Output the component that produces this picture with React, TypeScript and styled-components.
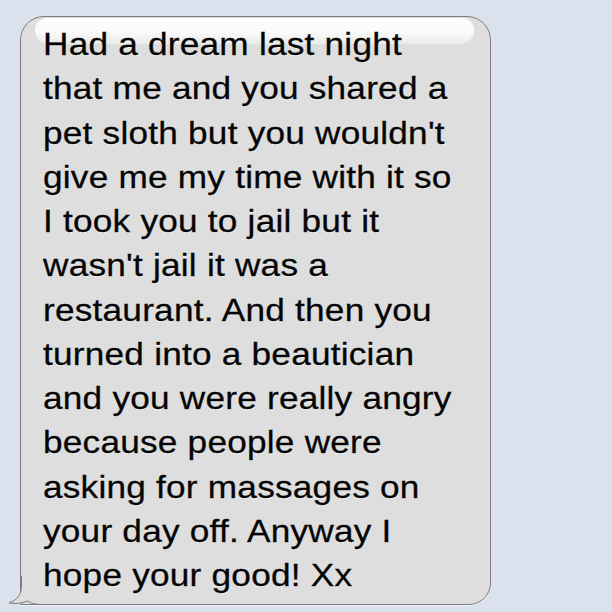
import React from 'react'
import styled, { createGlobalStyle } from 'styled-components'

const GlobalStyle = createGlobalStyle`
  html, body {
    margin: 0;
    padding: 0;
    background: #dbe1ed;
  }
`

const Page = styled.div`
  width: 612px;
  height: 612px;
  background: #dbe1ed;
  padding: 16px 0 0 20px;
  box-sizing: border-box;
`

const Bubble = styled.div`
  position: relative;
  width: 471px;
  box-sizing: border-box;
  border: 1px solid #7d7d7d;
  border-radius: 24px 24px 22px 0;
  background: #dedede;
  box-shadow: 0 1px 1px rgba(255, 255, 255, 0.6);
  padding: 5px 10px 7px 22px;
`

const Gloss = styled.div`
  position: absolute;
  top: 1px;
  left: 14px;
  right: 16px;
  height: 26px;
  border-radius: 12px 12px 14px 14px;
  background: linear-gradient(#ffffff, #fafafa 55%, #eaeaea);
`

const Text = styled.div`
  position: relative;
  font-family: "Liberation Sans", Arial, sans-serif;
  font-size: 32px;
  letter-spacing: 0.2px;
  line-height: 44.25px;
  color: #050505;
  text-shadow: 0 1px 0 rgba(255, 255, 255, 0.7);
  white-space: nowrap;
  transform: scaleX(1.1);
  transform-origin: left top;
  -webkit-text-stroke: 0.3px #050505;
`

const Tail = styled.svg`
  position: absolute;
  left: -13px;
  bottom: -2px;
`

const lines = [
  'Had a dream last night',
  'that me and you shared a',
  "pet sloth but you wouldn't",
  'give me my time with it so',
  'I took you to jail but it',
  "wasn't jail it was a",
  'restaurant. And then you',
  'turned into a beautician',
  'and you were really angry',
  'because people were',
  'asking for massages on',
  'your day off. Anyway I',
  'hope your good! Xx',
]

export default function App() {
  return (
    <>
      <GlobalStyle />
      <Page>
        <Bubble>
          <Gloss />
          <Tail width="40" height="30" viewBox="0 0 40 30">
            <path
              d="M13.5 0 L13.5 10 C13.5 19 9 24 1 27 C8 28 14 27.5 19.5 25 C23 27.5 28 28.5 34 28.5 L40 28.5 L40 0 Z"
              fill="#dedede"
            />
            <path
              d="M13.5 0 L13.5 10 C13.5 19 9 24 1 27 C8 28 14 27.5 19.5 25 C23 27.5 28 28.5 34 28.5 L40 28.5"
              fill="none"
              stroke="#7d7d7d"
              strokeWidth="1"
            />
          </Tail>
          <Text>
            {lines.map((l) => (
              <div key={l}>{l}</div>
            ))}
          </Text>
        </Bubble>
      </Page>
    </>
  )
}
